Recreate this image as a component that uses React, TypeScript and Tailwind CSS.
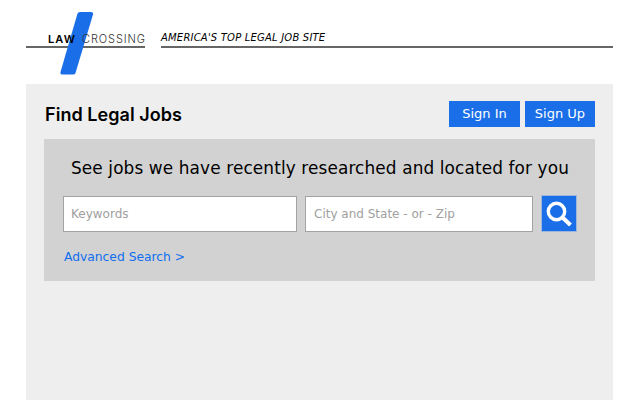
export default function App() {
  const font = { fontFamily: "'DejaVu Sans', Inter, sans-serif" };
  const inter = { fontFamily: "Inter, sans-serif" };
  return (
    <div className="w-[640px] h-[400px] overflow-hidden bg-white flex flex-col" style={font}>
      <header className="h-[84px] pl-[26px] pr-[27px] flex items-start shrink-0">
        <div className="relative w-[119px] h-[48px] border-b-2 border-[#666666] flex items-end shrink-0">
          <svg className="absolute left-[34px] top-[12px]" width="34" height="63" viewBox="0 0 34 63">
            <path d="M17.5 1.5 Q18 0 20 0 L31 0 Q33.5 0 33 2.5 L15.5 61 Q15 62.5 13 62.5 L2 62.5 Q0 62.5 0.5 60 Z" fill="#1a6fe8" />
          </svg>
          <div className="relative pl-[22px] flex text-[11px] leading-[14px] text-black whitespace-nowrap" style={inter}>
            <span className="font-semibold tracking-[1.1px]">LAW</span>
            <span className="ml-[6px] font-light tracking-[0.9px] text-[#333333]">CROSSING</span>
          </div>
        </div>
        <div className="ml-[16px] flex-1 h-[48px] border-b-2 border-[#666666] flex items-end">
          <span className="pb-[1px] text-[10px] leading-[14px] italic text-black tracking-[0.2px] whitespace-nowrap">AMERICA'S TOP LEGAL JOB SITE</span>
        </div>
      </header>
      <main className="mr-[27px] ml-[26px] flex-1 bg-[#eeeeee] px-[18px] pt-[17px]">
        <div className="flex items-center justify-between h-[26px]">
          <h1 className="pl-[1px] text-[18px] font-semibold text-black tracking-[0.05px]" style={inter}>Find Legal Jobs</h1>
          <div className="flex gap-[5px]">
            <button className="w-[71px] h-[26px] bg-[#1a6fe8] text-white text-[13px] font-normal">Sign In</button>
            <button className="w-[70px] h-[26px] bg-[#1a6fe8] text-white text-[13px] font-normal">Sign Up</button>
          </div>
        </div>
        <section className="mt-[12px] h-[142px] bg-[#d2d2d2] pl-[19px] pr-[18px] pt-[17px]">
          <h2 className="text-center text-[16.9px] leading-[24px] font-normal text-black tracking-[0.12px] whitespace-nowrap">See jobs we have recently researched and located for you</h2>
          <div className="mt-[16px] flex items-end">
            <div className="w-[234px] h-[36px] bg-white border border-[#a3a3a3] pl-[7px] flex items-center text-[12px] text-[#a0a0a0]">Keywords</div>
            <div className="ml-[8px] w-[228px] h-[36px] bg-white border border-[#a3a3a3] pl-[8px] flex items-center text-[12px] text-[#a0a0a0]">City and State - or - Zip</div>
            <button className="ml-[8px] w-[36px] h-[37px] -mt-[1px] bg-[#1a6fe8] border border-[#9db8dc] flex items-center justify-center">
              <svg width="28" height="28" viewBox="0 0 28 28" fill="none" stroke="white">
                <circle cx="11.5" cy="11.5" r="8.2" strokeWidth="3.4" />
                <path d="M17.5 17.5 L25.5 25" strokeWidth="4" />
              </svg>
            </button>
          </div>
          <a className="block mt-[16px] ml-[1px] text-[12.3px] leading-[18px] text-[#0f6ef0]">Advanced Search &gt;</a>
        </section>
      </main>
    </div>
  );
}
